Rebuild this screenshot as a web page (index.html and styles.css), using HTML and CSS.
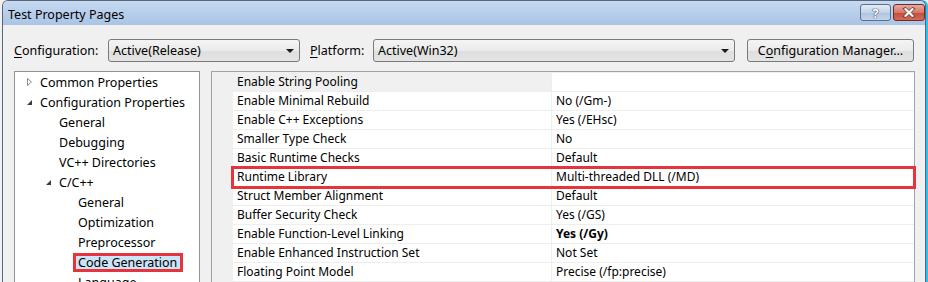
FILE: index.html
```html
<!DOCTYPE html>
<html lang="en">
<head>
    <meta charset="UTF-8">
    <link rel="stylesheet" href="styles.css">
    <title>Test Property Pages</title>
</head>
<body>
    <div class="window">
        <div class="titlebar">
            <span class="title">Test Property Pages</span>
            <div class="capbtns">
                <div class="capbtn help">?</div>
                <div class="capbtn close">
                    <svg width="14" height="11" viewBox="0 0 14 11">
                        <path d="M1 1.5 L4 0.5 L7 3.5 L10 0.5 L13 1.5 L9.2 5.5 L13 9.5 L10 10.5 L7 7.5 L4 10.5 L1 9.5 L4.8 5.5 Z" fill="#fff" stroke="#5a2a24" stroke-width="0.9" stroke-linejoin="round"/>
                    </svg>
                </div>
            </div>
        </div>

        <div class="client">
            <div class="toolbar">
                <label class="lbl lbl-config"><u>C</u>onfiguration:</label>
                <div class="combo combo-config">
                    <span>Active(Release)</span>
                    <i class="arrow"></i>
                </div>
                <label class="lbl lbl-platform"><u>P</u>latform:</label>
                <div class="combo combo-platform">
                    <span>Active(Win32)</span>
                    <i class="arrow"></i>
                </div>
                <div class="button">C<u>o</u>nfiguration Manager...</div>
            </div>

            <div class="main">
                <div class="tree">
                    <div class="node l0">
                        <span class="exp">
                            <svg width="9" height="10" viewBox="0 0 9 10"><path d="M2.5 1.5 L6.5 5 L2.5 8.5 Z" fill="#fff" stroke="#8c8c8c" stroke-width="1"/></svg>
                        </span>
                        <span>Common Properties</span>
                    </div>
                    <div class="node l0">
                        <span class="exp">
                            <svg width="9" height="10" viewBox="0 0 9 10"><path d="M7 3 L7 8 L2 8 Z" fill="#3c3c3c"/></svg>
                        </span>
                        <span>Configuration Properties</span>
                    </div>
                    <div class="node l1"><span class="exp"></span><span>General</span></div>
                    <div class="node l1"><span class="exp"></span><span>Debugging</span></div>
                    <div class="node l1"><span class="exp"></span><span>VC++ Directories</span></div>
                    <div class="node l1">
                        <span class="exp">
                            <svg width="9" height="10" viewBox="0 0 9 10"><path d="M7 3 L7 8 L2 8 Z" fill="#3c3c3c"/></svg>
                        </span>
                        <span>C/C++</span>
                    </div>
                    <div class="node l2"><span class="exp"></span><span>General</span></div>
                    <div class="node l2"><span class="exp"></span><span>Optimization</span></div>
                    <div class="node l2"><span class="exp"></span><span>Preprocessor</span></div>
                    <div class="node l2"><span class="exp"></span><span class="sel">Code Generation</span></div>
                    <div class="node l2"><span class="exp"></span><span>Language</span></div>
                </div>

                <div class="grid">
                    <div class="row first"><div class="name">Enable String Pooling</div><div class="val"></div></div>
                    <div class="row"><div class="name">Enable Minimal Rebuild</div><div class="val">No (/Gm-)</div></div>
                    <div class="row"><div class="name">Enable C++ Exceptions</div><div class="val">Yes (/EHsc)</div></div>
                    <div class="row"><div class="name">Smaller Type Check</div><div class="val">No</div></div>
                    <div class="row"><div class="name">Basic Runtime Checks</div><div class="val">Default</div></div>
                    <div class="row marked"><div class="name">Runtime Library</div><div class="val">Multi-threaded DLL (/MD)</div></div>
                    <div class="row"><div class="name">Struct Member Alignment</div><div class="val">Default</div></div>
                    <div class="row"><div class="name">Buffer Security Check</div><div class="val">Yes (/GS)</div></div>
                    <div class="row"><div class="name">Enable Function-Level Linking</div><div class="val bold">Yes (/Gy)</div></div>
                    <div class="row"><div class="name">Enable Enhanced Instruction Set</div><div class="val">Not Set</div></div>
                    <div class="row"><div class="name">Floating Point Model</div><div class="val">Precise (/fp:precise)</div></div>
                </div>
            </div>
        </div>
    </div>
</body>
</html>
```

FILE: styles.css
```css
body {
    margin: 0;
    width: 928px;
    height: 282px;
    overflow: hidden;
    background-color: #f0f0f0;
    font-family: "Noto Sans", "Liberation Sans", sans-serif;
    font-size: 12px;
    color: #000000;
}
u {
    text-decoration: underline;
    text-underline-offset: 2px;
}

.window {
    margin-left: 2px;
    width: 924px;
    height: 282px;
    box-sizing: border-box;
    border: 1px solid #56667c;
    border-bottom: none;
    border-radius: 6px 6px 0 0;
    background-color: #f0f0f0;
    box-shadow: 2px 0 0 #2cc2ef;
    overflow: hidden;
}

/* caption */
.titlebar {
    height: 24px;
    display: flex;
    align-items: center;
    justify-content: space-between;
    padding: 0 0 0 5px;
    background: linear-gradient(#c6d9f0, #aac4e6);
}
.title {
    font-size: 12.5px;
    padding-top: 2px;
}
.capbtns {
    display: flex;
    gap: 2px;
    align-self: flex-start;
    margin-top: 3px;
}
.capbtn {
    height: 17px;
    box-sizing: border-box;
    border: 1px solid #5d6f89;
    border-radius: 3px;
    display: flex;
    align-items: center;
    justify-content: center;
}
.help {
    width: 31px;
    background: linear-gradient(#e3ebf5, #c3d3e9 50%, #aec3e0 51%, #c4d5eb);
    color: #ffffff;
    font-weight: bold;
    font-size: 13px;
    text-shadow: 0 0 1px #394a63, 0 0 1px #394a63, 0 0 1px #394a63;
}
.close {
    width: 32px;
    border-color: #6b2d26;
    background: linear-gradient(#e8a89e, #d7776a 50%, #c44c3d 51%, #d36c55);
}

/* client area */
.client {
    padding: 0 10px 0 11px;
}
.toolbar {
    margin-top: 14px;
    height: 23px;
    display: flex;
    align-items: center;
}
.lbl {
    font-size: 12.5px;
}
.lbl-config {
    width: 94px;
}
.lbl-platform {
    width: 63px;
    margin-left: 10px;
}
.combo {
    height: 23px;
    box-sizing: border-box;
    border: 1px solid #7a7a7a;
    border-radius: 3px;
    background: linear-gradient(#f4f4f4, #ebebeb 50%, #dedede 51%, #e4e4e4);
    display: flex;
    align-items: center;
    justify-content: space-between;
    padding: 0 5px 0 4px;
    font-size: 12.5px;
}
.combo-config {
    width: 192px;
}
.combo-platform {
    width: 362px;
}
.arrow {
    width: 0;
    height: 0;
    border-left: 4px solid transparent;
    border-right: 4px solid transparent;
    border-top: 4px solid #1a1a1a;
    margin-top: 1px;
}
.button {
    margin-left: 12px;
    width: 167px;
    height: 23px;
    box-sizing: border-box;
    border: 1px solid #7a7a7a;
    border-radius: 3px;
    background: linear-gradient(#f4f4f4, #ebebeb 50%, #dedede 51%, #e4e4e4);
    display: flex;
    align-items: center;
    justify-content: center;
    font-size: 12.5px;
}

.main {
    margin-top: 9px;
    display: flex;
    gap: 11px;
    height: 240px;
}

/* category tree */
.tree {
    width: 186px;
    box-sizing: border-box;
    border: 1px solid #8f949b;
    background-color: #ffffff;
    font-size: 12.5px;
}
.node {
    height: 20px;
    display: flex;
    align-items: center;
    white-space: nowrap;
}
.l0 { padding-left: 10px; }
.l1 { padding-left: 29px; }
.l2 { padding-left: 48px; }
.exp {
    width: 15px;
    flex: none;
    display: flex;
    align-items: center;
}
.sel {
    height: 19px;
    box-sizing: border-box;
    margin-left: -5px;
    padding: 0 3px 0 2px;
    border: 3px solid #e5343c;
    background-color: #cce4f7;
    display: flex;
    align-items: center;
}

/* property grid */
.grid {
    flex: 1;
    box-sizing: border-box;
    border: 1px solid #a3a3a3;
    background-color: #f0f0f0;
    padding: 1px 0 0 21px;
}
.row {
    height: 19px;
    box-sizing: border-box;
    display: flex;
    border-bottom: 1px solid #eeeeee;
    background-color: #ffffff;
    line-height: 18px;
}
.name {
    width: 319px;
    flex: none;
    box-sizing: border-box;
    border-right: 1px solid #eeeeee;
    padding-left: 4px;
    white-space: nowrap;
}
.val {
    flex: 1;
    padding-left: 4px;
    white-space: nowrap;
}
.bold {
    font-weight: bold;
}
.first .name {
    background-color: #f0f0f0;
}
.marked {
    outline: 3px solid #e5343c;
    outline-offset: -1px;
}
```
